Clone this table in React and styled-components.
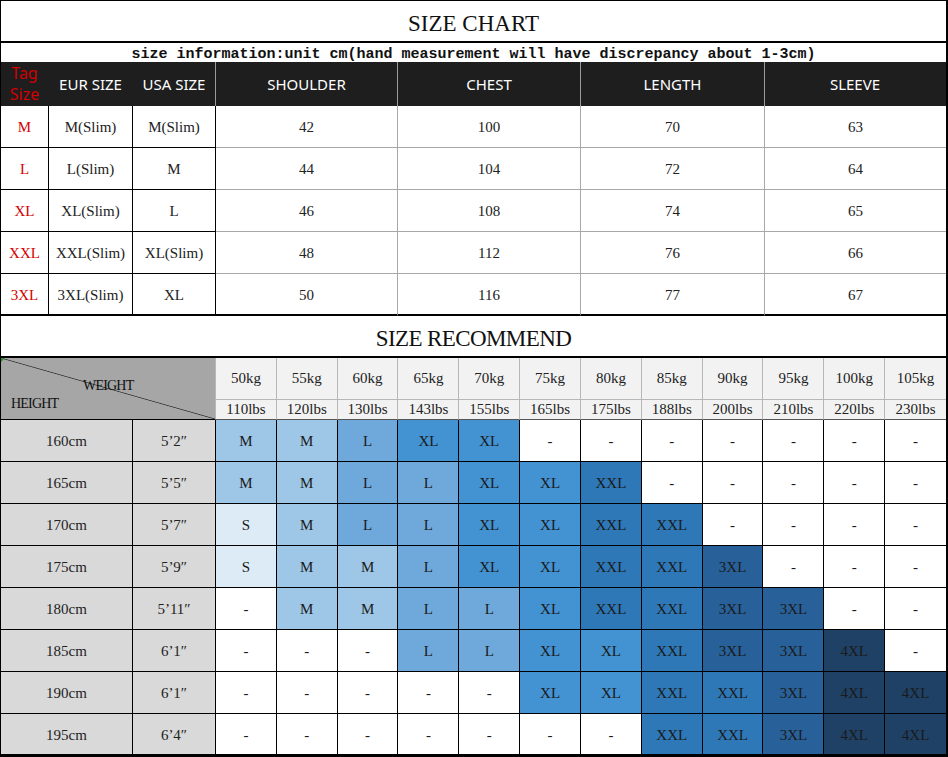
import React from 'react'
import styled, { createGlobalStyle } from 'styled-components'

const SERIF = `'Liberation Serif', 'Times New Roman', serif`
const SANS = `'Noto Sans', 'Open Sans', Arial, sans-serif`
const MONO = `'Liberation Mono', 'Courier New', monospace`

const FIT = {
  S: '#ddebf7',
  M: '#9ec6e7',
  L: '#6fa9dc',
  XL: '#4392d1',
  XXL: '#2e78b7',
  '3XL': '#28619a',
  '4XL': '#1f4166',
}

const SIZE_ROWS = [
  ['M', 'M(Slim)', 'M(Slim)', 42, 100, 70, 63],
  ['L', 'L(Slim)', 'M', 44, 104, 72, 64],
  ['XL', 'XL(Slim)', 'L', 46, 108, 74, 65],
  ['XXL', 'XXL(Slim)', 'XL(Slim)', 48, 112, 76, 66],
  ['3XL', '3XL(Slim)', 'XL', 50, 116, 77, 67],
]

const WEIGHTS = [
  ['50kg', '110lbs'], ['55kg', '120lbs'], ['60kg', '130lbs'], ['65kg', '143lbs'],
  ['70kg', '155lbs'], ['75kg', '165lbs'], ['80kg', '175lbs'], ['85kg', '188lbs'],
  ['90kg', '200lbs'], ['95kg', '210lbs'], ['100kg', '220lbs'], ['105kg', '230lbs'],
]

const FIT_ROWS = [
  ['160cm', '5’2″', 'M M L XL XL - - - - - - -'],
  ['165cm', '5’5″', 'M M L L XL XL XXL - - - - -'],
  ['170cm', '5’7″', 'S M L L XL XL XXL XXL - - - -'],
  ['175cm', '5’9″', 'S M M L XL XL XXL XXL 3XL - - -'],
  ['180cm', '5’11″', '- M M L L XL XXL XXL 3XL 3XL - -'],
  ['185cm', '6’1″', '- - - L L XL XL XXL 3XL 3XL 4XL -'],
  ['190cm', '6’1″', '- - - - - XL XL XXL XXL 3XL 4XL 4XL'],
  ['195cm', '6’4″', '- - - - - - - XXL XXL 3XL 4XL 4XL'],
]

const GlobalStyle = createGlobalStyle`
  html, body {
    margin: 0;
    padding: 0;
    background: #fff;
  }
  * {
    box-sizing: border-box;
  }
`

const Sheet = styled.div`
  width: 948px;
  height: 757px;
  display: flex;
  flex-direction: column;
  background: #fff;
  border-top: 1px solid #000;
  border-left: 1px solid #000;
  border-right: 2px solid #000;
  border-bottom: 3px solid #000;
  overflow: hidden;
`

const Banner = styled.div`
  height: 42px;
  flex: none;
  display: flex;
  align-items: center;
  justify-content: center;
  padding-top: 6px;
  border-bottom: 2px solid #000;
  font-family: ${SERIF};
  font-size: 23px;
  color: #111;
  letter-spacing: ${p => (p.$tight ? '-0.6px' : '0')};
`

const Note = styled.div`
  height: 19px;
  flex: none;
  display: flex;
  align-items: center;
  justify-content: center;
  padding-top: 3px;
  font-family: ${MONO};
  font-weight: bold;
  font-size: 15px;
  color: #111;
  white-space: nowrap;
`

const SizeGrid = styled.div`
  flex: none;
  display: grid;
  grid-template-columns: 48px 84px 83px 182px 183px 184px 181px;
  grid-template-rows: 44px repeat(5, 42px);
`

const HeadCell = styled.div`
  display: flex;
  flex-direction: column;
  align-items: center;
  justify-content: center;
  background: #1e1e1e;
  color: ${p => (p.$red ? '#d20000' : '#fff')};
  font-family: ${SANS};
  font-size: ${p => (p.$red ? '16px' : '15px')};
  line-height: ${p => (p.$red ? '21px' : '20px')};
  text-align: center;
  border-right: 1px solid ${p => (p.$divider ? '#9a9a9a' : '#1e1e1e')};
`

const SizeCell = styled.div`
  display: flex;
  align-items: center;
  justify-content: center;
  padding-top: 2px;
  font-family: ${SERIF};
  font-size: 15px;
  color: ${p => (p.$red ? '#d40000' : '#222')};
  border-right: ${p => (p.$lastCol ? 'none' : `1px solid ${p.$num ? '#a8a8a8' : '#000'}`)};
  border-bottom: ${p => (p.$lastRow ? '2px solid #000' : `1px solid ${p.$num ? '#a8a8a8' : '#000'}`)};
`

const FitGrid = styled.div`
  flex: 1;
  display: grid;
  grid-template-columns: 132px 83px repeat(12, 1fr);
  grid-template-rows: 42px 20px repeat(7, 42px) 1fr;
`

const DiagCell = styled.div`
  position: relative;
  grid-column: 1 / 3;
  grid-row: 1 / 3;
  display: flex;
  flex-direction: column;
  padding-top: 20px;
  background-color: #a6a6a6;
  background-image: linear-gradient(
    to top right,
    transparent calc(50% - 0.8px),
    #3a3a3a 50%,
    transparent calc(50% + 0.8px)
  );
  border-right: 1px solid #b7b7b7;
  border-bottom: 1px solid #000;
  font-family: ${SERIF};
  font-size: 14px;
  line-height: 16px;
  letter-spacing: -0.8px;
  color: #111;

  &::before {
    content: '';
    position: absolute;
    left: 0;
    top: 0;
    border-top: 4px solid #2e8b2e;
    border-right: 4px solid transparent;
  }
`

const AxisLabel = styled.span`
  margin-left: ${p => p.$indent}px;
  margin-top: ${p => p.$gap || 0}px;
`

const WeightCell = styled.div`
  display: flex;
  align-items: center;
  justify-content: center;
  background: #f2f2f2;
  font-family: ${SERIF};
  font-size: 15px;
  color: #222;
  white-space: nowrap;
  border-right: ${p => (p.$lastCol ? 'none' : '1px solid #b7b7b7')};
  border-bottom: 1px solid ${p => (p.$lbs ? '#555' : '#b7b7b7')};
`

const HeightCell = styled.div`
  display: flex;
  align-items: center;
  justify-content: center;
  padding-top: 2px;
  background: #d9d9d9;
  font-family: ${SERIF};
  font-size: 15px;
  color: #222;
  border-right: 1px solid #000;
  border-bottom: ${p => (p.$lastRow ? 'none' : '1px solid #000')};
`

const FitCell = styled.div`
  display: flex;
  align-items: center;
  justify-content: center;
  padding-top: 2px;
  background: ${p => p.$bg || '#fff'};
  font-family: ${SERIF};
  font-size: 15px;
  color: #1a1a1a;
  border-right: ${p => (p.$lastCol ? 'none' : '1px solid #000')};
  border-bottom: ${p => (p.$lastRow ? 'none' : '1px solid #000')};
`

const SizeTable = () => (
  <SizeGrid>
    <HeadCell $red>
      <span>Tag</span>
      <span>Size</span>
    </HeadCell>
    <HeadCell>EUR SIZE</HeadCell>
    <HeadCell $divider>USA SIZE</HeadCell>
    <HeadCell $divider>SHOULDER</HeadCell>
    <HeadCell $divider>CHEST</HeadCell>
    <HeadCell $divider>LENGTH</HeadCell>
    <HeadCell>SLEEVE</HeadCell>
    {SIZE_ROWS.map((row, r) =>
      row.map((val, c) => (
        <SizeCell
          key={`${r}-${c}`}
          $red={c === 0}
          $num={c > 2}
          $lastCol={c === row.length - 1}
          $lastRow={r === SIZE_ROWS.length - 1}
        >
          {val}
        </SizeCell>
      ))
    )}
  </SizeGrid>
)

const FitTable = () => (
  <FitGrid>
    <DiagCell>
      <AxisLabel $indent={82}>WEIGHT</AxisLabel>
      <AxisLabel $indent={10} $gap={2}>HEIGHT</AxisLabel>
    </DiagCell>
    {WEIGHTS.map(([kg], i) => (
      <WeightCell key={kg} $lastCol={i === WEIGHTS.length - 1}>{kg}</WeightCell>
    ))}
    {WEIGHTS.map(([kg, lbs], i) => (
      <WeightCell key={lbs + i} $lbs $lastCol={i === WEIGHTS.length - 1}>{lbs}</WeightCell>
    ))}
    {FIT_ROWS.map(([cm, ft, fits], r) => {
      const lastRow = r === FIT_ROWS.length - 1
      const sizes = fits.split(' ')
      return (
        <React.Fragment key={cm}>
          <HeightCell $lastRow={lastRow}>{cm}</HeightCell>
          <HeightCell $lastRow={lastRow}>{ft}</HeightCell>
          {sizes.map((s, c) => (
            <FitCell
              key={c}
              $bg={FIT[s]}
              $lastRow={lastRow}
              $lastCol={c === sizes.length - 1}
            >
              {s}
            </FitCell>
          ))}
        </React.Fragment>
      )
    })}
  </FitGrid>
)

export default function App() {
  return (
    <>
      <GlobalStyle />
      <Sheet>
        <Banner>SIZE CHART</Banner>
        <Note>size information:unit cm(hand measurement will have discrepancy about 1-3cm)</Note>
        <SizeTable />
        <Banner $tight>SIZE RECOMMEND</Banner>
        <FitTable />
      </Sheet>
    </>
  )
}
